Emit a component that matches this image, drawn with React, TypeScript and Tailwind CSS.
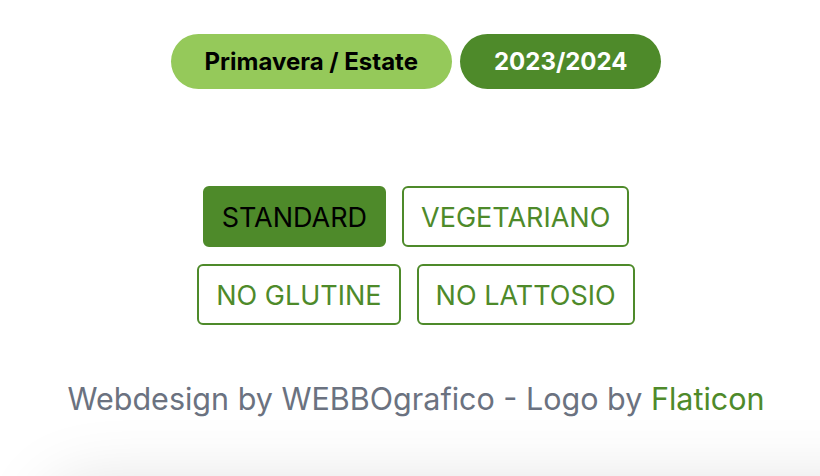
import React, { useState } from "react";

const diets = [
  ["STANDARD", "VEGETARIANO"],
  ["NO GLUTINE", "NO LATTOSIO"],
];

export default function App() {
  const [active, setActive] = useState("STANDARD");

  return (
    <div className="min-h-screen bg-white font-['Inter','Liberation_Sans',sans-serif] overflow-hidden">
      <main className="flex flex-col items-center pl-3 pt-[34px]">
        {/* season / year */}
        <div className="flex gap-2">
          <span className="h-[55px] flex items-center px-[34px] rounded-full bg-[#95c95a] text-[24px] font-bold text-black">
            Primavera / Estate
          </span>
          <span className="h-[55px] flex items-center px-[34px] rounded-full bg-[#4e8a2a] text-[24px] font-bold text-white">
            2023/2024
          </span>
        </div>

        {/* diet filter */}
        <div className="mt-[97px] flex flex-col items-center gap-[17px]">
          {diets.map((row, i) => (
            <div key={i} className="flex gap-4">
              {row.map((d) => (
                <button
                  key={d}
                  onClick={() => setActive(d)}
                  className={`h-[61px] px-[17px] pt-[3px] rounded-md border-2 border-[#4e8a2a] text-[27px] ${
                    active === d ? "bg-[#4e8a2a] text-black" : "bg-white text-[#4e8a2a]"
                  }`}
                >
                  {d}
                </button>
              ))}
            </div>
          ))}
        </div>

        <p className="mt-[51px] text-[30.5px] text-[#6b7280]">
          Webdesign by WEBBOgrafico - Logo by <a className="text-[#4e8a2a]">Flaticon</a>
        </p>

        <div className="mt-[62px] ml-[160px] w-[900px] h-[200px] bg-white rounded-[40px] shadow-[0_0_70px_rgba(0,0,0,0.13)]" />
      </main>
    </div>
  );
}
